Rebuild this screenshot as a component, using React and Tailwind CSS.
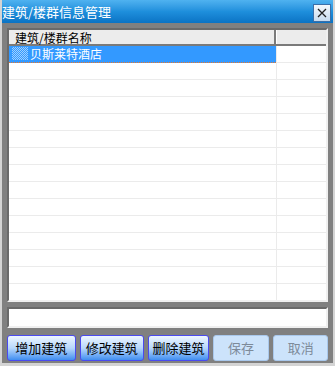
import React from 'react';

const rows = Array.from({ length: 15 });

const App = () => {
  const font = { fontFamily: '"Noto Sans CJK SC", "Noto Sans", sans-serif' };

  return (
    <div className="w-[335px] h-[366px] flex flex-col bg-[#808080] border-l-2 border-r-2 border-b-[3px] border-[#d4d4d4] overflow-hidden" style={font}>

      {/* title bar */}
      <div className="h-[23px] flex items-center justify-between bg-gradient-to-b from-[#4fb2f0] via-[#1e8fdc] to-[#0b73c4] pr-[2px]">
        <span className="text-white text-[13px] leading-none">建筑/楼群信息管理</span>
        <div className="w-[18px] h-[18px] mt-[2px] flex items-center justify-center bg-gradient-to-b from-[#f4f8fc] to-[#c8dcef] border border-[#3b6fa8]">
          <svg width="10" height="10" viewBox="0 0 10 10">
            <path d="M1 1 L9 9 M9 1 L1 9" stroke="#222" strokeWidth="1.3" />
          </svg>
        </div>
      </div>

      <div className="flex-1 flex flex-col px-[5px] pt-[5px] pb-[2px]">

        {/* list */}
        <div className="h-[274px] border-2 border-[#6a6a6a] border-r-[#f0f0f0] border-b-[#f0f0f0] bg-white flex flex-col">
          <div className="flex h-[16px] border-b-2 border-[#7a7a7a]">
            <div className="w-[267px] bg-[#ececec] border-r-2 border-[#7a7a7a] text-[12px] leading-[15px] pl-[6px] text-black">建筑/楼群名称</div>
            <div className="flex-1 bg-[#ececec] border-l border-white"></div>
          </div>
          <div className="flex-1 overflow-hidden">
            {rows.map((_, i) => (
              <div key={i} className="flex h-[17px] border-b border-[#ebebeb]">
                <div className="w-[268px] border-r border-[#ebebeb] flex items-center">
                  {i === 0 && (
                    <div className="w-[268px] h-[17px] flex items-center bg-[#3399ff] border-b border-dotted border-[#e8762a]">
                      <div className="w-[16px] h-[13px] ml-[3px] bg-[repeating-conic-gradient(#9fcfff_0_25%,#3399ff_0_50%)] bg-[length:2px_2px]"></div>
                      <span className="text-white text-[12px] leading-none ml-[2px]">贝斯莱特酒店</span>
                    </div>
                  )}
                </div>
                <div className="flex-1"></div>
              </div>
            ))}
          </div>
        </div>

        {/* text box */}
        <div className="h-[21px] mt-[5px] bg-white border-2 border-[#6a6a6a] border-r-[#f0f0f0] border-b-[#f0f0f0]"></div>

        {/* buttons */}
        <div className="flex gap-[4px] mt-[7px]">
          <button className="w-[69px] h-[26px] rounded-[3px] border border-[#4a4af0] bg-gradient-to-b from-[#eef6ff] via-[#b8d8fb] to-[#3f8ef0] text-[13px] text-black">增加建筑</button>
          <button className="w-[65px] h-[26px] rounded-[3px] border border-[#4a4af0] bg-gradient-to-b from-[#eef6ff] via-[#b8d8fb] to-[#3f8ef0] text-[13px] text-black">修改建筑</button>
          <button className="w-[61px] h-[26px] rounded-[3px] border border-[#4a4af0] bg-gradient-to-b from-[#eef6ff] via-[#b8d8fb] to-[#3f8ef0] text-[13px] text-black">删除建筑</button>
          <button className="w-[57px] h-[26px] rounded-[3px] border border-[#a9c8ec] bg-[#cce3fb] text-[13px] text-[#7d8a99]">保存</button>
          <button className="w-[55px] h-[26px] rounded-[3px] border border-[#a9c8ec] bg-[#cce3fb] text-[13px] text-[#7d8a99]">取消</button>
        </div>
      </div>
    </div>
  );
};

export default App;
